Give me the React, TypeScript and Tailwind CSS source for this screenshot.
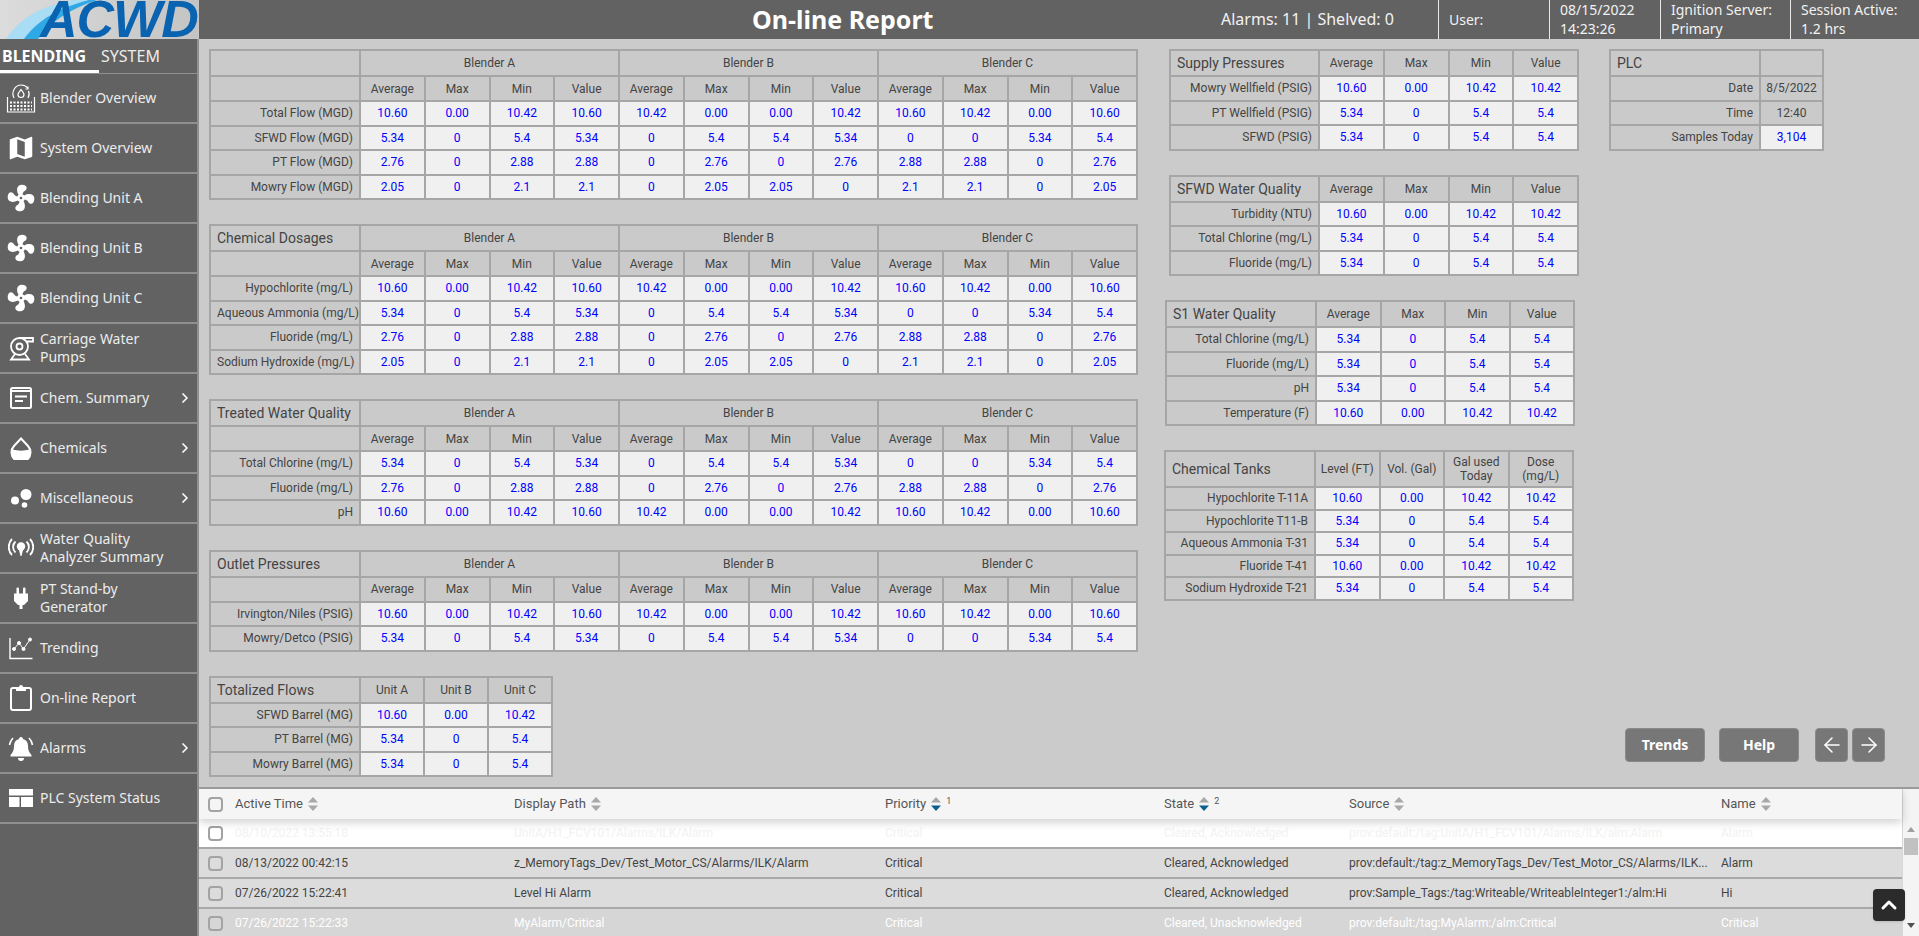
import { ReactNode } from 'react';
import { ChevronRight, ArrowLeft, ArrowRight, ChevronUp } from 'lucide-react';

const FLOW = ['10.60', '0.00', '10.42', '10.60', '10.42', '0.00', '0.00', '10.42', '10.60', '10.42', '0.00', '10.60'];
const SFWD = ['5.34', '0', '5.4', '5.34', '0', '5.4', '5.4', '5.34', '0', '0', '5.34', '5.4'];
const PT = ['2.76', '0', '2.88', '2.88', '0', '2.76', '0', '2.76', '2.88', '2.88', '0', '2.76'];
const MOWRY = ['2.05', '0', '2.1', '2.1', '0', '2.05', '2.05', '0', '2.1', '2.1', '0', '2.05'];
const BIG = ['10.60', '0.00', '10.42', '10.42'];
const SMALL = ['5.34', '0', '5.4', '5.4'];
const STATS = ['Average', 'Max', 'Min', 'Value'];

const BORDER = 'border-2 border-[#a6a6a6]';

function FanIcon() {
  return (
    <svg viewBox="0 0 24 24" className="w-8 h-8 fill-white">
      <path d="M12,11A1,1 0 0,0 11,12A1,1 0 0,0 12,13A1,1 0 0,0 13,12A1,1 0 0,0 12,11M12.5,2C17,2 17.11,5.57 14.75,6.75C13.76,7.24 13.32,8.29 13.13,9.22C13.61,9.42 14.03,9.73 14.35,10.13C18.05,8.13 22.03,8.92 22.03,12.5C22.03,17 18.46,17.1 17.28,14.73C16.78,13.74 15.72,13.3 14.79,13.11C14.59,13.59 14.28,14 13.88,14.34C15.87,18.03 15.08,22 11.5,22C7,22 6.91,18.42 9.27,17.24C10.25,16.75 10.69,15.71 10.89,14.79C10.4,14.59 9.97,14.27 9.65,13.87C5.96,15.85 2,15.07 2,11.5C2,7 5.56,6.89 6.74,9.26C7.24,10.25 8.29,10.68 9.22,10.87C9.41,10.39 9.73,9.97 10.14,9.65C8.15,5.96 8.94,2 12.5,2Z" />
    </svg>
  );
}

function MapIcon() {
  return (
    <svg viewBox="0 0 24 24" className="w-[30px] h-[30px] fill-white">
      <path d="M15,19L9,16.89V5L15,7.11M20.5,3C20.44,3 20.39,3 20.34,3L15,5.1L9,3L3.36,4.9C3.15,4.97 3,5.15 3,5.38V20.5A0.5,0.5 0 0,0 3.5,21C3.55,21 3.61,21 3.66,20.97L9,18.9L15,21L20.64,19.1C20.85,19 21,18.85 21,18.62V3.5A0.5,0.5 0 0,0 20.5,3Z" />
    </svg>
  );
}

function BlenderIcon() {
  return (
    <svg viewBox="0 0 30 30" className="w-[30px] h-[30px] fill-none stroke-white" strokeWidth="1.2">
      <path d="M1.5 14v15h27V14" />
      <path d="M8 15c-3-6 1-13 7-13 3 0 5 1 6.500 3M22 3.500V6h-2.500M22 15c1.500-3 1.500-5 .5-7" />
      <path d="M15 6.500c2 2.500 3 3.700 3 5a3 3 0 0 1-6 0c0-1.300 1-2.500 3-5z" />
      <path d="M4 19.500h22M4 23h22M4 26.500h22" strokeDasharray="2 1.500" strokeWidth="1.800" />
    </svg>
  );
}

function PumpIcon() {
  return (
    <svg viewBox="0 0 26 26" className="w-[26px] h-[26px] fill-none stroke-white" strokeWidth="1.800">
      <circle cx="11.500" cy="11.500" r="8.500" />
      <circle cx="11.500" cy="11.500" r="3" />
      <path d="M11.500 3H25v3.500H18.500" />
      <path d="M7 19l-4 5.500h18L17 19" />
    </svg>
  );
}

function SummaryIcon() {
  return (
    <svg viewBox="0 0 24 24" className="w-6 h-6 fill-none stroke-white" strokeWidth="2">
      <rect x="2" y="2" width="20" height="20" rx="1.500" />
      <path d="M2 5h20M6 10.500h12M6 15h8" strokeWidth="2" />
    </svg>
  );
}

function DropIcon() {
  return (
    <svg viewBox="0 0 24 24" className="w-6 h-6">
      <path d="M12 2.500l7 7.500a9.500 9.500 0 1 1-14 0z" fill="none" stroke="white" strokeWidth="2" />
      <path d="M3 13.500c6 1.500 12 1.500 18 0a9.500 9.500 0 1 1-18 0z" fill="white" />
    </svg>
  );
}

function BubblesIcon() {
  return (
    <svg viewBox="0 0 24 24" className="w-6 h-6 fill-white">
      <circle cx="17" cy="8.500" r="5.500" />
      <circle cx="6" cy="14.500" r="4" />
      <circle cx="15.500" cy="19" r="2.800" />
    </svg>
  );
}

function AnalyzerIcon() {
  return (
    <svg viewBox="0 0 26 24" className="w-[26px] h-6 fill-none stroke-white" strokeWidth="1.800">
      <circle cx="13" cy="10.500" r="4.200" fill="white" stroke="none" />
      <path d="M11 14l1.500 6h1L15 14z" fill="white" stroke="none" />
      <path d="M7.500 5.500a7.500 7.500 0 0 0 0 11M18.500 5.500a7.500 7.500 0 0 1 0 11M4 3a11.500 11.500 0 0 0 0 16M22 3a11.500 11.500 0 0 1 0 16" />
    </svg>
  );
}

function PlugIcon() {
  return (
    <svg viewBox="0 0 24 24" className="w-6 h-6 fill-white">
      <rect x="7.500" y="1.500" width="2.500" height="7" rx="1" />
      <rect x="14" y="1.500" width="2.500" height="7" rx="1" />
      <path d="M5 7.500h14v7.500l-4 4h-1.500v4h-3v-4H9l-4-4z" />
    </svg>
  );
}

function TrendIcon() {
  return (
    <svg viewBox="0 0 24 24" className="w-6 h-6 fill-white stroke-white" strokeWidth="1">
      <path d="M1 2v20.500h22.500" fill="none" strokeWidth="1.400" />
      <path d="M5 13l5-6 4.500 6L21 3.500" fill="none" />
      <circle cx="5" cy="13" r="1.500" />
      <circle cx="10" cy="7" r="1.500" />
      <circle cx="14.500" cy="13" r="1.500" />
      <circle cx="21" cy="3.500" r="1.500" />
    </svg>
  );
}

function ClipboardIcon() {
  return (
    <svg viewBox="0 0 24 28" className="w-6 h-7">
      <rect x="2" y="4" width="20" height="22" rx="2" fill="none" stroke="white" strokeWidth="2" />
      <path d="M7 3h3a2 2 0 0 1 4 0h3v4H7z" fill="white" />
    </svg>
  );
}

function BellIcon() {
  return (
    <svg viewBox="0 0 26 26" className="w-[26px] h-[26px] fill-white">
      <path d="M13 2a2 2 0 0 1 2 2c3.500 1 5 3.500 5 7 0 4 1 6.500 3.500 9v1.500h-21V20C5 17.500 6 15 6 11c0-3.500 1.500-6 5-7a2 2 0 0 1 2-2z" />
      <path d="M10 23h6a3 3 0 0 1-6 0z" />
      <path d="M1.500 10c.5-3 1.500-5 3.500-7M24.500 10c-.5-3-1.500-5-3.500-7" fill="none" stroke="white" strokeWidth="1.600" />
    </svg>
  );
}

function LayoutIcon() {
  return (
    <svg viewBox="0 0 24 18" className="w-6 h-[18px] fill-white">
      <rect x="0" y="0" width="24" height="6.500" />
      <rect x="0" y="8" width="10.500" height="10" />
      <rect x="12" y="8" width="12" height="10" />
    </svg>
  );
}

const NAV: { icon: ReactNode; label: string[]; more?: boolean }[] = [
  { icon: <BlenderIcon />, label: ['Blender Overview'] },
  { icon: <MapIcon />, label: ['System Overview'] },
  { icon: <FanIcon />, label: ['Blending Unit A'] },
  { icon: <FanIcon />, label: ['Blending Unit B'] },
  { icon: <FanIcon />, label: ['Blending Unit C'] },
  { icon: <PumpIcon />, label: ['Carriage Water', 'Pumps'] },
  { icon: <SummaryIcon />, label: ['Chem. Summary'], more: true },
  { icon: <DropIcon />, label: ['Chemicals'], more: true },
  { icon: <BubblesIcon />, label: ['Miscellaneous'], more: true },
  { icon: <AnalyzerIcon />, label: ['Water Quality', 'Analyzer Summary'] },
  { icon: <PlugIcon />, label: ['PT Stand-by', 'Generator'] },
  { icon: <TrendIcon />, label: ['Trending'] },
  { icon: <ClipboardIcon />, label: ['On-line Report'] },
  { icon: <BellIcon />, label: ['Alarms'], more: true },
  { icon: <LayoutIcon />, label: ['PLC System Status'] },
];

function Sidebar() {
  return (
    <aside className="w-[199px] shrink-0 bg-[#626262] border-r-2 border-[#8f8f8f] font-['Noto_Sans',sans-serif] text-[#ececec]">
      <div className="flex h-[35px] border-b border-[#8f8f8f] text-base leading-[22px]">
        <div className="w-[99px] pl-0.5 pt-1.5 border-b-[3px] border-white font-bold text-white">BLENDING</div>
        <div className="pl-0.5 pt-1.5">SYSTEM</div>
      </div>
      {NAV.map((item) => (
        <div key={item.label[0]} className="flex items-center h-[50px] border-b-2 border-[#8f8f8f]">
          <div className="flex w-10 shrink-0 justify-center pl-px">{item.icon}</div>
          <div className="flex-1 text-sm leading-[18px]">
            {item.label.map((line) => (
              <div key={line}>{line}</div>
            ))}
          </div>
          {item.more && <ChevronRight className="w-4 h-4 mr-1 text-white" strokeWidth={2.5} />}
        </div>
      ))}
    </aside>
  );
}

function Logo() {
  return (
    <div className="relative w-[199px] h-[39px] shrink-0 overflow-hidden bg-gradient-to-r from-[#dcdcdc] to-[#c4c4c4]">
      <svg viewBox="0 0 199 39" className="absolute inset-0 w-full h-full">
        <path d="M6 39C20 18 42 5 75 0h14C58 8 38 20 24 39z" fill="#a9dcf5" />
        <path d="M24 39C38 20 58 8 89 0h8C70 9 50 22 38 39z" fill="#2fa9e6" />
      </svg>
      <div className="absolute left-[40px] top-0 font-['Liberation_Sans',sans-serif] text-[52px] leading-[39px] font-bold italic tracking-[-1px] text-[#0a63b0]">
        ACWD
      </div>
    </div>
  );
}

function Header() {
  return (
    <header className="flex h-[39px] shrink-0 bg-[#626262] font-['Noto_Sans',sans-serif] text-[#f2f2f2]">
      <Logo />
      <div className="w-[1022px] pl-[553px] text-[25px] leading-[38px] font-bold text-white whitespace-nowrap">On-line Report</div>
      <div className="w-[217px] text-base leading-[38px] whitespace-nowrap">Alarms: 11 | Shelved: 0</div>
      <div className="w-[111px] border-l border-[#e8e8e8] pl-2.5 text-sm leading-[40px]">User:</div>
      <div className="w-[111px] border-l border-[#e8e8e8] pl-2.5 text-[14px] leading-[19px]">
        <div>08/15/2022</div>
        <div>14:23:26</div>
      </div>
      <div className="w-[130px] border-l border-[#e8e8e8] pl-2.5 text-[14px] leading-[19px]">
        <div>Ignition Server:</div>
        <div>Primary</div>
      </div>
      <div className="flex-1 border-l border-[#e8e8e8] pl-2.5 text-[14px] leading-[19px]">
        <div>Session Active:</div>
        <div>1.2 hrs</div>
      </div>
    </header>
  );
}

function Label({ children, title }: { children?: ReactNode; title?: boolean }) {
  return (
    <td className={`${BORDER} bg-[#cacaca] px-1.5 whitespace-nowrap ${title ? 'text-left text-sm' : 'text-right'}`}>{children}</td>
  );
}

function Head({ children, colSpan }: { children?: ReactNode; colSpan?: number }) {
  return (
    <td colSpan={colSpan} className={`${BORDER} bg-[#cacaca] text-center`}>
      {children}
    </td>
  );
}

function Value({ children }: { children: ReactNode }) {
  return <td className={`${BORDER} bg-[#f0f0f0] text-center text-[#0000ff]`}>{children}</td>;
}

function BlenderTable({ title, rows }: { title?: string; rows: [string, string[]][] }) {
  return (
    <table className="table-fixed border-collapse w-[929px] text-xs text-[#444444]">
      <colgroup>
        <col className="w-[150px]" />
        {FLOW.map((_, i) => (
          <col key={i} />
        ))}
      </colgroup>
      <tbody>
        <tr className="h-[26px]">
          <Label title>{title}</Label>
          <Head colSpan={4}>Blender A</Head>
          <Head colSpan={4}>Blender B</Head>
          <Head colSpan={4}>Blender C</Head>
        </tr>
        <tr className="h-[25px]">
          <Label />
          {[0, 1, 2].flatMap((b) => STATS.map((s) => <Head key={`${b}${s}`}>{s}</Head>))}
        </tr>
        {rows.map(([name, values]) => (
          <tr key={name} className="h-[24.500px]">
            <Label>{name}</Label>
            {values.map((v, i) => (
              <Value key={i}>{v}</Value>
            ))}
          </tr>
        ))}
      </tbody>
    </table>
  );
}

function StatTable({
  title,
  heads,
  rows,
  className,
  labelClass,
}: {
  title: string;
  heads: ReactNode[];
  rows: [string, string[]][];
  className: string;
  labelClass: string;
}) {
  return (
    <table className={`table-fixed border-collapse text-xs text-[#444444] ${className}`}>
      <colgroup>
        <col className={labelClass} />
        {heads.map((_, i) => (
          <col key={i} />
        ))}
      </colgroup>
      <tbody>
        <tr className="h-[26px]">
          <Label title>{title}</Label>
          {heads.map((h, i) => (
            <Head key={i}>{h}</Head>
          ))}
        </tr>
        {rows.map(([name, values]) => (
          <tr key={name} className="h-[24.500px]">
            <Label>{name}</Label>
            {values.map((v, i) => (
              <Value key={i}>{v}</Value>
            ))}
          </tr>
        ))}
      </tbody>
    </table>
  );
}

function TanksTable() {
  const rows: [string, string[]][] = [
    ['Hypochlorite T-11A', BIG],
    ['Hypochlorite T11-B', SMALL],
    ['Aqueous Ammonia T-31', SMALL],
    ['Fluoride T-41', BIG],
    ['Sodium Hydroxide T-21', SMALL],
  ];
  return (
    <table className="table-fixed border-collapse w-[410px] ml-[-5px] text-xs text-[#444444]">
      <colgroup>
        <col className="w-[150px]" />
        <col />
        <col />
        <col />
        <col />
      </colgroup>
      <tbody>
        <tr className="h-[36px] leading-[14px]">
          <Label title>Chemical Tanks</Label>
          <Head>Level (FT)</Head>
          <Head>Vol. (Gal)</Head>
          <Head>Gal used Today</Head>
          <Head>Dose (mg/L)</Head>
        </tr>
        {rows.map(([name, values]) => (
          <tr key={name} className="h-[22.500px]">
            <Label>{name}</Label>
            {values.map((v, i) => (
              <Value key={i}>{v}</Value>
            ))}
          </tr>
        ))}
      </tbody>
    </table>
  );
}

function PlcTable() {
  return (
    <table className="table-fixed border-collapse w-[215px] text-xs text-[#444444]">
      <colgroup>
        <col className="w-[150px]" />
        <col />
      </colgroup>
      <tbody>
        <tr className="h-[26px]">
          <Label title>PLC</Label>
          <Head />
        </tr>
        <tr className="h-[24.500px]">
          <Label>Date</Label>
          <Head>8/5/2022</Head>
        </tr>
        <tr className="h-[24.500px]">
          <Label>Time</Label>
          <Head>12:40</Head>
        </tr>
        <tr className="h-[24.500px]">
          <Label>Samples Today</Label>
          <Value>3,104</Value>
        </tr>
      </tbody>
    </table>
  );
}

function SortIcon({ active }: { active?: boolean }) {
  return (
    <svg viewBox="0 0 12 16" className="w-3 h-4 ml-1">
      <path d="M6 1l5 5.500H1z" fill="#a8a8a8" />
      <path d="M6 15L1 9.500h10z" fill={active ? '#0b5f8f' : '#a8a8a8'} />
    </svg>
  );
}

function Check({ light }: { light?: boolean }) {
  return <div className={`w-[15px] h-[15px] rounded-sm border-2 border-[#a3a3a3] ${light ? 'bg-white' : ''}`} />;
}

const COLS = 'grid grid-cols-[36px_279px_371px_279px_185px_372px_181px] items-center';

const ALARMS = [
  {
    row: 'bg-white text-[#f2f2f2]',
    cells: ['08/10/2022 13:55:18', 'UnitA/H1_FCV101/Alarms/ILK/Alarm', 'Critical', 'Cleared, Acknowledged', 'prov:default:/tag:UnitA/H1_FCV101/Alarms/ILK/alm:Alarm', 'Alarm'],
  },
  {
    row: 'bg-[#dcdcdc] text-[#444444]',
    cells: ['08/13/2022 00:42:15', 'z_MemoryTags_Dev/Test_Motor_CS/Alarms/ILK/Alarm', 'Critical', 'Cleared, Acknowledged', 'prov:default:/tag:z_MemoryTags_Dev/Test_Motor_CS/Alarms/ILK...', 'Alarm'],
  },
  {
    row: 'bg-[#dcdcdc] text-[#444444]',
    cells: ['07/26/2022 15:22:41', 'Level Hi Alarm', 'Critical', 'Cleared, Acknowledged', 'prov:Sample_Tags:/tag:Writeable/WriteableInteger1:/alm:Hi', 'Hi'],
  },
  {
    row: 'bg-[#d6d6d6] text-white',
    cells: ['07/26/2022 15:22:33', 'MyAlarm/Critical', 'Critical', 'Cleared, Unacknowledged', 'prov:default:/tag:MyAlarm:/alm:Critical', 'Critical'],
  },
];

function AlarmTable() {
  const heads: [string, boolean, string?][] = [
    ['Active Time', false],
    ['Display Path', false],
    ['Priority', true, '1'],
    ['State', true, '2'],
    ['Source', false],
    ['Name', false],
  ];
  return (
    <div className="relative flex h-[149px] shrink-0 border-t-2 border-[#9a9a9a] bg-white font-['Roboto',sans-serif] text-xs overflow-hidden">
      <div className="w-[1703px] shrink-0">
        <div className={`${COLS} relative z-10 h-[30px] bg-[#f5f5f5] text-[13px] text-[#555555] shadow-[0_3px_10px_rgba(0,0,0,0.2)]`}>
          <div className="pl-[9px]">
            <Check />
          </div>
          {heads.map(([name, active, order]) => (
            <div key={name} className="flex items-center">
              {name}
              <SortIcon active={active} />
              {order && <span className="ml-1 mb-1.5 text-[9px]">{order}</span>}
            </div>
          ))}
        </div>
        {ALARMS.map((alarm, n) => (
          <div key={n} className={`${COLS} h-[30px] border-b-2 border-[#a8a8a8] ${alarm.row}`}>
            <div className="pl-[9px]">
              <Check light={n === 0} />
            </div>
            {alarm.cells.map((cell, i) => (
              <div key={i} className="truncate">
                {cell}
              </div>
            ))}
          </div>
        ))}
      </div>
      <div className="flex flex-1 flex-col items-center pt-[30px] bg-[#f4f4f4] border-l border-[#d8d8d8]">
        <div className="mt-2 h-0 w-0 border-x-4 border-b-[5px] border-x-transparent border-b-[#a0a0a0]" />
        <div className="mt-[6px] h-[17px] w-[14px] bg-[#c1c1c1]" />
        <div className="mt-auto mb-2 h-0 w-0 border-x-4 border-t-[5px] border-x-transparent border-t-[#505050]" />
      </div>
      <button className="absolute left-[1674px] top-[100px] flex h-8 w-8 items-center justify-center rounded-sm bg-[#2b2b2b] text-white shadow">
        <ChevronUp className="w-6 h-6" strokeWidth={3} />
      </button>
    </div>
  );
}

function ActionButtons() {
  const btn = 'flex items-center justify-center h-[34px] rounded bg-[#777777] border border-[#8a8a8a] text-white';
  return (
    <div className="flex self-end mr-[34px] font-['Noto_Sans',sans-serif] text-sm font-bold">
      <div className={`${btn} w-20`}>Trends</div>
      <div className={`${btn} w-20 ml-[14px]`}>Help</div>
      <div className={`${btn} w-[33px] ml-4`}>
        <ArrowLeft className="w-6 h-6" strokeWidth={1.5} />
      </div>
      <div className={`${btn} w-[33px] ml-1`}>
        <ArrowRight className="w-6 h-6" strokeWidth={1.5} />
      </div>
    </div>
  );
}

export default function App() {
  return (
    <div className="flex flex-col h-screen overflow-hidden bg-[#cbcbcb]">
      <Header />
      <div className="flex flex-1 min-h-0">
        <Sidebar />
        <div className="flex flex-col flex-1 min-w-0">
          <div className="flex flex-1 min-h-0 pl-2.5 pt-2.5 pb-[25px] font-['Roboto',sans-serif]">
            <div className="flex flex-col w-[960px] shrink-0 gap-[24px]">
              <BlenderTable
                rows={[
                  ['Total Flow (MGD)', FLOW],
                  ['SFWD Flow (MGD)', SFWD],
                  ['PT Flow (MGD)', PT],
                  ['Mowry Flow (MGD)', MOWRY],
                ]}
              />
              <BlenderTable
                title="Chemical Dosages"
                rows={[
                  ['Hypochlorite (mg/L)', FLOW],
                  ['Aqueous Ammonia (mg/L)', SFWD],
                  ['Fluoride (mg/L)', PT],
                  ['Sodium Hydroxide (mg/L)', MOWRY],
                ]}
              />
              <BlenderTable
                title="Treated Water Quality"
                rows={[
                  ['Total Chlorine (mg/L)', SFWD],
                  ['Fluoride (mg/L)', PT],
                  ['pH', FLOW],
                ]}
              />
              <BlenderTable
                title="Outlet Pressures"
                rows={[
                  ['Irvington/Niles (PSIG)', FLOW],
                  ['Mowry/Detco (PSIG)', SFWD],
                ]}
              />
              <StatTable
                title="Totalized Flows"
                heads={['Unit A', 'Unit B', 'Unit C']}
                labelClass="w-[150px]"
                className="w-[344px]"
                rows={[
                  ['SFWD Barrel (MG)', ['10.60', '0.00', '10.42']],
                  ['PT Barrel (MG)', ['5.34', '0', '5.4']],
                  ['Mowry Barrel (MG)', ['5.34', '0', '5.4']],
                ]}
              />
            </div>
            <div className="flex flex-col w-[440px] shrink-0 gap-[24px]">
              <StatTable
                title="Supply Pressures"
                heads={STATS}
                labelClass="w-[149px]"
                className="w-[410px]"
                rows={[
                  ['Mowry Wellfield (PSIG)', BIG],
                  ['PT Wellfield (PSIG)', SMALL],
                  ['SFWD (PSIG)', SMALL],
                ]}
              />
              <StatTable
                title="SFWD Water Quality"
                heads={STATS}
                labelClass="w-[149px]"
                className="w-[410px]"
                rows={[
                  ['Turbidity (NTU)', BIG],
                  ['Total Chlorine (mg/L)', SMALL],
                  ['Fluoride (mg/L)', SMALL],
                ]}
              />
              <StatTable
                title="S1 Water Quality"
                heads={STATS}
                labelClass="w-[150px]"
                className="w-[410px] ml-[-4px]"
                rows={[
                  ['Total Chlorine (mg/L)', SMALL],
                  ['Fluoride (mg/L)', SMALL],
                  ['pH', SMALL],
                  ['Temperature (F)', BIG],
                ]}
              />
              <TanksTable />
            </div>
            <div className="flex flex-col flex-1 justify-between">
              <PlcTable />
              <ActionButtons />
            </div>
          </div>
          <AlarmTable />
        </div>
      </div>
    </div>
  );
}
